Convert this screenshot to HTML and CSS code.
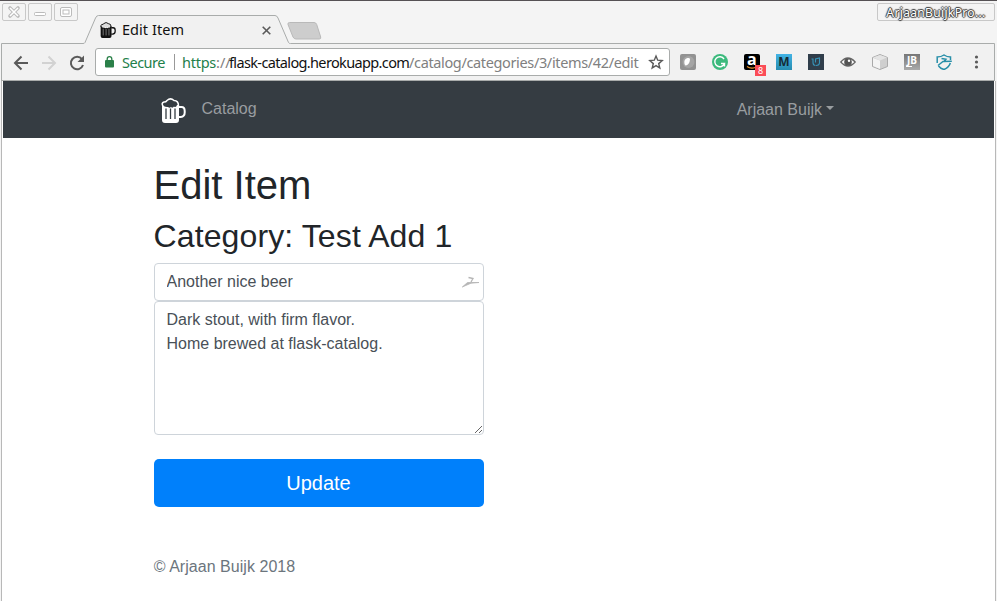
FILE: index.html
```
<!DOCTYPE html>
<html lang="en">
<head>
<meta charset="utf-8">
<title>Edit Item</title>
<link rel="stylesheet" href="styles.css">
</head>
<body>
<svg width="0" height="0" class="defs">
  <symbol id="beer" viewBox="0 0 24 25">
    <path d="M1.500 8Q-.5 5 2.500 4Q4.500 4 5.500 2.500Q9-.8 12.500 2.500Q17 2.500 17 8" fill="var(--foam,none)" stroke="currentColor" stroke-width="1.500"/>
    <path d="M.5 6v16q0 3 3 3h11q3 0 3-3V7h-2q-1 3-3 1.500q-1.500 2-3 .5q-1.500 1.500-3 0Q2.500 9.500 .5 6Z" fill="currentColor"/>
    <path d="M17 9h3q3.200 0 3.200 4v1.500q0 4-4 4.500H17" fill="none" stroke="currentColor" stroke-width="2"/>
    <path d="M4.500 10.500V21M9 10.500V21M13.500 10.500V21" stroke="var(--gap)" stroke-width="1.300"/>
  </symbol>
</svg>
<div class="window">
  <header class="titlebar">
    <div class="controls">
      <span><svg width="22" height="17" viewBox="0 0 22 17"><path d="M7 4l8 8M15 4l-8 8" stroke="#bbb" stroke-width="3.600" stroke-linecap="round"/><path d="M7 4l8 8M15 4l-8 8" stroke="#fff" stroke-width="1.600"/></svg></span>
      <span><svg width="22" height="17" viewBox="0 0 22 17"><rect x="5.500" y="8.500" width="11" height="3" rx="1" fill="#fff" stroke="#bbb"/></svg></span>
      <span><svg width="22" height="17" viewBox="0 0 22 17"><rect x="5.500" y="3.500" width="11" height="9" rx="1.500" fill="#fff" stroke="#bbb"/><rect x="8" y="6" width="6" height="4" fill="#fff" stroke="#bbb"/></svg></span>
    </div>
    <div class="profile">ArjaanBuijkPro...</div>
    <svg class="tab-shape" width="997" height="30" viewBox="0 0 997 30"><path d="M1.500 30V28.500H83q1.500 0 2-1L95.500 3q1-2.500 3-2.500H275q2 0 3 2.500l10.500 24.500q.5 1 2 1H994.500V30Z" fill="#f1f1f1"/><path d="M1.500 30V28.500H83q1.500 0 2-1L95.500 3q1-2.500 3-2.500H275q2 0 3 2.500l10.500 24.500q.5 1 2 1H994.500V30" fill="none" stroke="#a9acab"/><path d="M289.500 7.500H314q2 0 2.700 2l4 12.500q.5 2-1.500 2H296q-2 0-3-2l-5-12.500q-.5-2 1.500-2Z" fill="#cdcdcd" stroke="#b9b9b9"/></svg>
    <div class="tab"><svg class="tab-beer" width="16" height="16"><use href="#beer"/></svg><span class="tab-title">Edit Item</span><svg width="9" height="9" viewBox="0 0 9 9"><path d="M.7.700l7.600 7.600M8.300.700L.7 8.300" stroke="#5a5a5a" stroke-width="1.600"/></svg></div>
  </header>
  <div class="toolbar">
    <svg class="nav-icon" width="16" height="16" viewBox="0 0 16 16"><path d="M15 8H2M8.500 1.500L2 8l6.500 6.500" fill="none" stroke="#5a5a5a" stroke-width="2"/></svg>
    <svg class="nav-icon" width="16" height="16" viewBox="0 0 16 16"><path d="M1 8h13M7.500 1.500L14 8l-6.500 6.500" fill="none" stroke="#d2d2d2" stroke-width="2"/></svg>
    <svg class="nav-icon" width="16" height="16" viewBox="0 0 16 16"><path d="M13 4.200A6.200 6.200 0 1 0 14 10" fill="none" stroke="#5a5a5a" stroke-width="2"/><path d="M15 .5V7H8.500Z" fill="#5a5a5a"/></svg>
    <div class="address">
      <svg width="9" height="12" viewBox="0 0 9 12"><rect y="4" width="9" height="7.500" rx="1" fill="#2b8049"/><path d="M2.200 5V3a2.300 2.300 0 0 1 4.600 0v2" fill="none" stroke="#2b8049" stroke-width="1.300"/></svg>
      <span class="secure">Secure</span><i></i>
      <span class="url"><span class="scheme">https</span><span class="slashes">://</span><span class="host">flask-catalog.herokuapp.com</span><span class="path">/catalog/categories/3/items/42/edit</span></span>
      <svg class="star" width="16" height="16" viewBox="0 0 16 16"><path d="M8 2l1.700 4.200 4.500.4-3.500 3 1.100 4.400L8 11.600 4.200 14l1.100-4.400-3.500-3 4.500-.4Z" fill="none" stroke="#5a5a5a" stroke-width="1.400"/></svg>
    </div>
    <div class="extensions">
      <svg viewBox="0 0 16 16"><rect width="16" height="16" rx="2" fill="#929292"/><circle cx="8.500" cy="8" r="6" fill="#a5a5a5"/><path d="M4.500 10q-1-5 3-6 3-.5 2.500 1.500-.5 5-4 6-1 0-1.500-1.500Z" fill="#fff"/></svg>
      <svg viewBox="0 0 16 16"><circle cx="8" cy="8" r="8" fill="#3cba7d"/><path d="M12 5A5 5 0 1 0 12.500 9.500H9M12.500 9v3.500" fill="none" stroke="#fff" stroke-width="1.400"/></svg>
      <div class="amazon"><b>a</b><svg viewBox="0 0 16 16"><path d="M3 12.500q4 2.800 8 1" fill="none" stroke="#f29a30" stroke-width="1.200"/></svg><em>8</em></div>
      <div class="m">M</div>
      <svg viewBox="0 0 16 16"><rect width="16" height="16" fill="#303e4b"/><path d="M3.500 5H5v3.500Q5 11.500 7.500 11.500M7.500 8.500V5l4-1v4.500q0 3-3.500 3" fill="none" stroke="#3794ba" stroke-width="1.100"/></svg>
      <svg viewBox="0 0 16 16"><path d="M.8 8q7-8 14.400 0Q8 16 .8 8Z" fill="#fff" stroke="#666" stroke-width="1.300"/><circle cx="8" cy="8" r="3.800" fill="#555"/><circle cx="9" cy="6.800" r="1.200" fill="#fff"/></svg>
      <svg viewBox="0 0 16 16"><path d="M8 .5l7.500 3v9L8 15.500l-7.500-3v-9Z" fill="#cfcfcf" stroke="#aaa"/><path d="M1 4l7 2.500V15l-7-3Z" fill="#f4f4f4"/><path d="M1 3.600L8 1l7 2.600L8 6.500Z" fill="#e4e4e4"/></svg>
      <div class="jb">JB<span></span></div>
      <svg viewBox="0 0 16 16"><path d="M1.200 9V3Q5 3 8 1q3 2 6.500 2v3M2.500 12q2 2.500 5.500 3.500 5-2 6.300-6.500" fill="none" stroke="#268ea8" stroke-width="1.500"/><path d="M2 11.500l5-4 8.800-.3M5.500 4.500l4.500.8-2.500 2.700" fill="none" stroke="#268ea8" stroke-width="1.400"/></svg>
      <svg viewBox="0 0 16 16"><g fill="#5a5a5a"><circle cx="8.500" cy="3" r="1.600"/><circle cx="8.500" cy="8" r="1.600"/><circle cx="8.500" cy="13" r="1.600"/></g></svg>
    </div>
  </div>
  <div class="page">
    <nav><div class="brand"><svg width="25" height="25"><use href="#beer"/></svg><a>Catalog</a></div><a class="user">Arjaan Buijk</a></nav>
    <main>
      <h1>Edit Item</h1>
      <h2>Category: Test Add 1</h2>
      <form>
        <div class="field"><input type="text" value="Another nice beer"><svg width="18" height="12" viewBox="0 0 18 12"><path d="M.3 11L5.500 6.500H17L9 7.200l-3 1.300Z" fill="#b5b5b5" stroke="#b5b5b5" stroke-width=".8"/><path d="M6.500 1.500l4.500 1L9 6" fill="none" stroke="#b5b5b5" stroke-width="1.300"/></svg></div>
        <textarea>Dark stout, with firm flavor.
Home brewed at flask-catalog.</textarea>
        <button type="button">Update</button>
      </form>
      <footer>© Arjaan Buijk 2018</footer>
    </main>
  </div>
</div>
</body>
</html>
```
FILE: styles.css
```
* { box-sizing: border-box; }
body { margin: 0; background: #fff; font-family: "Liberation Sans", Arial, sans-serif; overflow: hidden; }
.defs { position: absolute; }
svg { flex-shrink: 0; }
.window { height: 601px; display: flex; flex-direction: column; background: #f4f4f4; }
.titlebar { position: relative; height: 45px; flex-shrink: 0; background: #f4f4f4; border-top: 1px solid #555154; display: flex; justify-content: space-between; align-items: flex-start; padding: 2px 2px 0; font-family: "Noto Sans", sans-serif; }
.controls { display: flex; gap: 2px; }
.controls span { width: 24px; height: 18px; border: 1px solid #c8c8c8; border-radius: 2px; }
.controls svg { display: block; }
.profile { width: 118px; height: 18px; border: 1px solid #c8c8c8; border-radius: 2px; font-size: 12px; line-height: 17px; text-align: center; letter-spacing: .35px; color: #fff; text-shadow: 1px 0 1px #333, -1px 0 1px #333, 0 1px 1px #333, 0 -1px 1px #333; }
.tab-shape { position: absolute; left: 0; top: 14px; }
.tab { position: absolute; left: 100px; top: 17px; width: 171px; height: 24px; display: flex; align-items: center; }
.tab-beer { color: #111; --gap: #888; --foam: #ddd; }
.tab-title { flex: 1; margin-left: 6px; margin-top: -2px; font-size: 14.5px; color: #111; letter-spacing: .05px; }
.toolbar { height: 36px; flex-shrink: 0; background: #f1f1f1; border: solid #a9acab; border-width: 0 1px 1px 1px; margin: 0 2px 0 1px; display: flex; align-items: center; padding-left: 11px; }
.nav-icon { margin-right: 12px; }
.address { width: 575px; height: 28px; margin-left: -2px; margin-bottom: 2px; border: 1px solid #a9acab; border-radius: 3px; background: #fff; display: flex; align-items: center; padding: 0 5px 0 9px; font: 14.5px "Noto Sans", sans-serif; white-space: nowrap; }
.secure { width: 44px; margin-left: 8px; color: #1e804a; letter-spacing: -.5px; }
.address i { width: 1px; height: 16px; background: #999; margin: 0 7px 0 8px; }
.url { display: flex; color: #808080; }
.scheme { color: #1e804a; width: 34px; letter-spacing: -.25px; }
.slashes { width: 13px; }
.host { color: #111; width: 180px; letter-spacing: -.64px; }
.path { width: 229px; letter-spacing: -.36px; }
.star { margin-left: auto; }
.extensions { display: flex; gap: 16px; margin-left: 10px; margin-bottom: 1px; }
.extensions > * { width: 16px; height: 16px; flex-shrink: 0; }
.amazon { position: relative; background: #000; color: #fff; border-radius: 2px; }
.amazon b { position: absolute; left: 3px; top: -4px; font: bold 16px/18px "Open Sans", sans-serif; }
.amazon svg { position: absolute; left: 0; top: 0; }
.amazon em { position: absolute; left: 11px; top: 11px; width: 11px; height: 11px; background: #fb4d57; font: 9px/11px "Noto Sans", sans-serif; text-align: center; }
.m { background: linear-gradient(#42b3e5, #278cb0); color: #152b35; font: bold 12px/15px "Open Sans", sans-serif; text-align: center; }
.jb { background: linear-gradient(#777, #aaa); color: #fff; font: bold 10px/12px "Open Sans", sans-serif; padding-left: 3px; }
.jb span { display: block; width: 6px; height: 1px; background: #fff; margin-left: -1px; }
.page { flex: 1; background: #fff; border: solid #b8b8b8; border-width: 0 1px; margin: 0 1px; padding: 0 1px; }
nav { height: 57px; background: #353c42; display: flex; justify-content: space-between; align-items: center; padding: 0 161px 0 158px; color: #999da0; font-size: 16px; }
.brand { display: flex; align-items: center; gap: 15.500px; }
.brand svg { color: #fff; --gap: #353c42; margin-top: 1px; }
.brand a { margin-top: -2px; }
.user { display: flex; align-items: center; }
.user::after { content: ""; border: 4.500px solid transparent; border-top-color: #999da0; border-bottom: 0; margin: -3px -1px 0 4px; }
main { width: 330px; margin-left: 151px; padding-top: 23px; color: #212529; white-space: nowrap; }
h1, h2 { margin: 0 0 8px; font-weight: 400; line-height: 1.2; text-indent: -.5px; }
h1 { font-size: 40px; }
h2 { font-size: 32px; letter-spacing: .12px; }
form { display: flex; flex-direction: column; }
.field { position: relative; }
.field svg { position: absolute; right: 4px; top: 13px; }
input, textarea { display: block; width: 330px; margin: 0; padding: 6px 11.500px; border: 1px solid #ced4da; border-radius: 4px; background: #fff; color: #495057; font: 16px/24px "Liberation Sans", Arial, sans-serif; outline: 0; }
input { height: 38px; }
textarea { height: 134px; resize: both; }
button { height: 48px; margin-top: 24px; border: 0; border-radius: 5px; padding: 0 7px 0 6px; background: #0080fb; color: #fff; font: 20px "Liberation Sans", Arial, sans-serif; }
footer { margin-top: 48px; color: #6c757d; font-size: 16px; line-height: 24px; text-indent: -.3px; letter-spacing: .04px; }
```
